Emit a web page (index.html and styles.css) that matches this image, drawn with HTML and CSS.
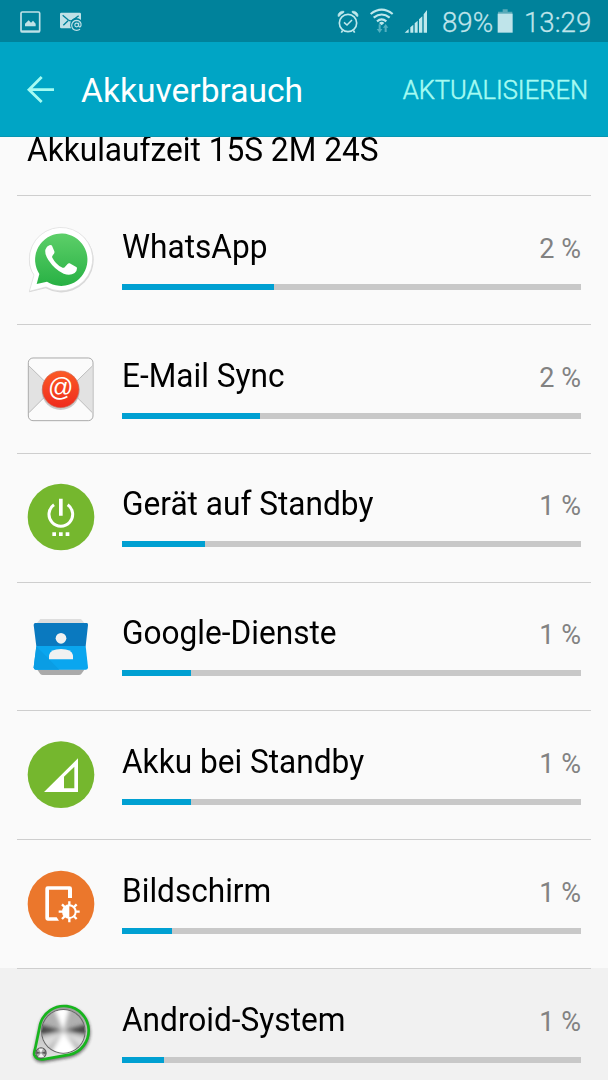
FILE: index.html
```html
<!DOCTYPE html>
<html lang="de">
<head>
<meta charset="utf-8">
<title>Akkuverbrauch</title>
<link rel="stylesheet" href="styles.css">
</head>
<body>
<div class="screen">
  <header class="status">
    <svg class="status-left" viewBox="0 0 300 126" fill="none">
      <rect x="63" y="36" width="56" height="60" rx="4" stroke="#bfe1e7" stroke-width="5"/>
      <path d="M63 91H119V96H63Z" fill="#bfe1e7"/>
      <path d="M75 79V71L86 61L93 68L99 62L107 71V79Z" fill="#bfe1e7"/>
      <path d="M184 38H239Q243 38 243 42V60Q237 54 229 54Q215 54 211 69Q209 77 213 85H184Q180 85 180 81V42Q180 38 184 38Z" fill="#bfe1e7"/>
      <path d="M188 46L205 60Q212 65 219 60L236 47M204 62L190 76" stroke="#00829b" stroke-width="4"/>
      <circle cx="230" cy="75" r="5.5" stroke="#bfe1e7" stroke-width="3.5"/>
      <path d="M236 68V77Q237 82 241 80Q244 77 243 71Q240 61 229 61Q216 63 215 76Q216 91 230 91Q236 91 240 88" stroke="#bfe1e7" stroke-width="3.5"/>
    </svg>
    <svg class="status-icons" viewBox="0 0 300 126" fill="none">
      <g stroke="#bfe8ec" stroke-width="5">
        <circle cx="54" cy="69" r="26"/>
        <path d="M42 67L51 75L66 60" stroke-width="4.5"/>
        <path d="M38 91L34 98M70 91L74 98"/>
      </g>
      <path d="M24 49Q23 42 29 37Q35 32 42 34L41 38Q32 41 28 49ZM84 49Q85 42 79 37Q73 32 66 34L67 38Q76 41 80 49Z" fill="#bfe8ec" stroke="#bfe8ec" stroke-width="2"/>
      <g stroke="#bfe8ec" stroke-width="6.5">
        <path d="M122 42Q155 16 188 42M131 53Q155 34 179 53M141 64Q155 52 169 64"/>
      </g>
      <path d="M147 69Q155 62 163 69L155 76Z" fill="#bfe8ec"/>
      <path d="M146 73H152V87H157L149 99L140 87H146ZM164 96H170V83H175L167 72L159 83H164Z" fill="#53b0c0"/>
      <path d="M224 98L236 87V98ZM241 98V82L250 74V98ZM254 98V70L263 62V98ZM267 98V58L277 49V98ZM281 98V43L291 30V98Z" fill="#bfe8ec"/>
    </svg>
    <span class="battery-text">89%</span>
    <svg class="battery" viewBox="0 0 48 126">
      <path d="M17 28H32V35H46V43H3V35H17Z" fill="#59aab9"/>
      <path d="M2 41H47V98H2Z" fill="#bfe4ea"/>
    </svg>
    <span class="clock">13:29</span>
  </header>
  <nav class="appbar">
    <svg class="back" viewBox="0 0 84 84" fill="none" stroke="#a5fbf2" stroke-width="8.500">
      <path d="M84 41H8M47 3L9 41L47 78"/>
    </svg>
    <h1 class="title">Akkuverbrauch</h1>
    <span class="action">AKTUALISIEREN</span>
  </nav>
  <main class="content">
    <p class="runtime">Akkulaufzeit 15S 2M 24S</p>
    <ul class="list">
      <li class="row">
        <svg class="icon" viewBox="51 50 201 201">
          <defs><linearGradient id="wa" x2="0" y2="1"><stop offset="0" stop-color="#5dcf69"/><stop offset="1" stop-color="#28b144"/></linearGradient></defs>
          <path d="M57 246L73 195Q57 175 57 149A97 97 0 1 1 107 234Z" fill="#999" opacity=".35"/>
          <path d="M58 243L72 194Q58 174 58 147A95 95 0 1 1 108 230Z" fill="#fff" stroke="#ddd" stroke-width="2"/>
          <path d="M80 221L88 191A78.500 78.500 0 1 1 111 214Z" fill="url(#wa)"/>
          <path d="M118 105Q110 107 106 118Q104 132 115 149Q135 179 161 190Q180 197 194 188Q201 183 201 174L200 171L179 159Q175 158 172 162L164 171Q160 174 155 171Q137 161 127 142Q125 138 129 134Q135 128 133 123L126 106Q124 103 118 105Z" fill="#fff"/>
        </svg>
        <div class="body">
          <div class="line"><span class="name">WhatsApp</span><span class="pct">2 %</span></div>
          <div class="bar"><div class="fill" style="width:33.1%"></div></div>
        </div>
      </li>
      <li class="row">
        <svg class="icon" viewBox="51 46 201 201">
          <defs><linearGradient id="em" x2="0" y2="1"><stop offset="0" stop-color="#fb5a25"/><stop offset="1" stop-color="#ef2b1d"/></linearGradient></defs>
          <rect x="55" y="52" width="194" height="188" rx="14" fill="#fbfbfb" stroke="#999" stroke-width="2.500"/>
          <path d="M57 76L128 145L57 216ZM247 76L176 145L247 216Z" fill="#e2e2e2"/>
          <path d="M57 76L128 145L57 216M247 76L176 145L247 216" fill="none" stroke="#a5a5a5" stroke-width="2"/>
          <circle cx="152" cy="151" r="57" fill="#aaa" opacity=".6"/>
          <circle cx="152" cy="146" r="55" fill="url(#em)" stroke="#ca6a58" stroke-width="2"/>
          <text class="at" x="152" y="165" text-anchor="middle">@</text>
        </svg>
        <div class="body">
          <div class="line"><span class="name">E-Mail Sync</span><span class="pct">2 %</span></div>
          <div class="bar"><div class="fill" style="width:30%"></div></div>
        </div>
      </li>
      <li class="row">
        <svg class="icon" viewBox="51 43 201 201">
          <circle cx="153" cy="142" r="100" fill="#75b72e"/>
          <path d="M132 105A35.500 35.500 0 1 0 173 105" fill="none" stroke="#fff" stroke-width="9"/>
          <path d="M147 87H158V138H147ZM127 188H138V199H127ZM147 188H158V199H147ZM167 188H178V199H167Z" fill="#fff"/>
        </svg>
        <div class="body">
          <div class="line"><span class="name">Gerät auf Standby</span><span class="pct">1 %</span></div>
          <div class="bar"><div class="fill" style="width:18%"></div></div>
        </div>
      </li>
      <li class="row">
        <svg class="icon" viewBox="51 39 201 201">
          <path d="M91 57H213L223 69H81Z" fill="#dedede"/>
          <path d="M81 208H224L214 222Q211 225 207 225H98Q94 225 91 222Z" fill="#aaa"/>
          <path d="M76 69H230Q235 69 234 75L227 139H79L71 75Q71 69 76 69Z" fill="#0a79bf"/>
          <path d="M79 138H227L234 202Q234 209 228 209H77Q71 209 71 202Z" fill="#0aa6ef"/>
          <path d="M79 139L148 209H77Q71 209 71 202Z" fill="#0a9de4"/>
          <circle cx="153" cy="115" r="16" fill="#f1f1f1"/>
          <path d="M117 178V166Q121 147 153 147Q185 147 189 166V178Z" fill="#f1f1f1"/>
        </svg>
        <div class="body">
          <div class="line"><span class="name">Google-Dienste</span><span class="pct">1 %</span></div>
          <div class="bar"><div class="fill" style="width:15.1%"></div></div>
        </div>
      </li>
      <li class="row">
        <svg class="icon" viewBox="51 36 201 201">
          <circle cx="153" cy="134" r="100" fill="#75b72e"/>
          <path fill-rule="evenodd" d="M204 85V186H102ZM193 110L162 140V175H193Z" fill="#fff"/>
        </svg>
        <div class="body">
          <div class="line"><span class="name">Akku bei Standby</span><span class="pct">1 %</span></div>
          <div class="bar"><div class="fill" style="width:15.1%"></div></div>
        </div>
      </li>
      <li class="row">
        <svg class="icon" viewBox="51 32 201 201">
          <circle cx="153" cy="131" r="100" fill="#eb772c"/>
          <path fill-rule="evenodd" d="M113 78H179Q186 78 186 85V113H174V88H117V171H140L147 181H113Q106 181 106 174V85Q106 78 113 78Z" fill="#fff"/>
          <g stroke="#fff" stroke-width="7"><path d="M178 123V186M146 154H209M156 132L200 176M200 132L156 176"/></g>
          <circle cx="178" cy="154" r="22" fill="#fff"/>
          <path d="M178 138A16 16 0 0 1 178 170Z" fill="#eb772c"/>
        </svg>
        <div class="body">
          <div class="line"><span class="name">Bildschirm</span><span class="pct">1 %</span></div>
          <div class="bar"><div class="fill" style="width:11%"></div></div>
        </div>
      </li>
      <li class="row row-pressed">
        <svg class="icon" viewBox="51 119 201 201">
          <defs>
            <linearGradient id="plate" x2="0" y2="1"><stop offset="0" stop-color="#999"/><stop offset="1" stop-color="#e5e5e5"/></linearGradient>
            <filter id="soft" x="-20%" y="-20%" width="140%" height="140%"><feGaussianBlur stdDeviation="4"/></filter>
            <clipPath id="disc"><circle cx="160" cy="213" r="64"/></clipPath>
            <filter id="brush" x="-20%" y="-20%" width="140%" height="140%"><feGaussianBlur stdDeviation="7"/></filter>
          </defs>
          <path d="M91 190A74 74 0 1 1 179 283L99 297Q80 299 73 284Q71 278 76 263Z" transform="translate(1 5)" fill="#222" stroke="#222" stroke-width="9" opacity=".6" filter="url(#soft)"/>
          <path d="M91 190A74 74 0 1 1 179 283L99 297Q80 299 73 284Q71 278 76 263Z" fill="url(#plate)" stroke="#17b51d" stroke-width="8"/>
          <circle cx="160" cy="213" r="67" fill="#666"/>
          <g clip-path="url(#disc)">
            <path d="M90 140H230V290H90Z" fill="#b0b0b0"/>
            <g filter="url(#brush)">
              <path d="M160 213L130 140H180ZM160 213L115 290H215Z" fill="#fff"/>
              <path d="M160 213L85 192V223ZM160 213L235 190V222Z" fill="#444"/>
              <path d="M160 213L85 235L105 275ZM160 213L235 235L220 270Z" fill="#ddd"/>
            </g>
          </g>
          <circle cx="93" cy="278" r="17" fill="#555"/>
          <circle cx="93" cy="278" r="14" fill="#aaa"/>
          <path d="M93 278L86 265H99ZM93 278L84 291H103Z" fill="#f3f3f3"/>
          <path d="M93 278L79 273V281ZM93 278L107 273V281Z" fill="#555"/>
        </svg>
        <div class="body">
          <div class="line"><span class="name">Android-System</span><span class="pct">1 %</span></div>
          <div class="bar"><div class="fill" style="width:9.1%"></div></div>
        </div>
      </li>
    </ul>
  </main>
</div>
</body>
</html>
```
FILE: styles.css
```css
* { box-sizing: border-box; }
body { margin: 0; font-family: Roboto, sans-serif; }
.screen { width: 608px; height: 1080px; overflow: hidden; background: #fafafa; display: flex; flex-direction: column; }
.status { height: 42px; flex: none; display: flex; background: #00829b; color: #bfe4ea; font-size: 27.700px; line-height: 46px; white-space: nowrap; }
.status-left { width: 100px; height: 42px; }
.status-icons { width: 100px; height: 42px; margin-left: 230px; }
.battery-text { width: 51px; margin-left: 12px; font-weight: 300; -webkit-text-stroke: 0.300px #bfe4ea; }
.battery { width: 16px; height: 42px; margin-left: 4px; }
.clock { margin-left: 11px; font-weight: 300; -webkit-text-stroke: 0.300px #bfe4ea; }
.appbar { height: 94.500px; flex: none; display: flex; align-items: center; background: #00a5c5; border-bottom: 1px solid #0896b2; padding: 2px 20px 0 26px; }
.back { width: 28px; height: 28px; flex: none; overflow: visible; }
.title { margin: 3px 0 0 27px; font-size: 33.600px; font-weight: 400; color: #fff; line-height: 40px; }
.action { margin: 1px 0 0 auto; font-size: 25.500px; color: #a5fbf2; font-weight: 300; -webkit-text-stroke: 0.500px #a5fbf2; }
.content { flex: 1; min-height: 0; overflow: hidden; }
.runtime { margin: 0; height: 58.500px; padding-left: 27px; font-size: 33px; line-height: 25px; color: #000; white-space: nowrap; transform: scaleX(0.959); transform-origin: 27px 0; }
.list { margin: 0; padding: 0; list-style: none; }
.row { height: 128.850px; display: flex; padding: 31.800px 27px 0; gap: 28px; background: linear-gradient(#cecece, #cecece) 17px 0 / 574px 1px no-repeat; }
.row-pressed { background-color: #f1f1f1; }
.icon { width: 67px; height: 67px; flex: none; overflow: visible; }
.body { flex: 1; }
.line { display: flex; justify-content: space-between; align-items: baseline; height: 57px; line-height: 40px; white-space: nowrap; }
.name { font-size: 33px; color: #000; transform: scaleX(0.958); transform-origin: 0 0; }
.pct { font-size: 27px; color: #828282; }
.bar { height: 6px; background: #c8c8c8; }
.fill { height: 6px; background: #00a0d2; }
.at { font-family: "Liberation Sans", sans-serif; font-size: 75px; fill: #fff; }
```
